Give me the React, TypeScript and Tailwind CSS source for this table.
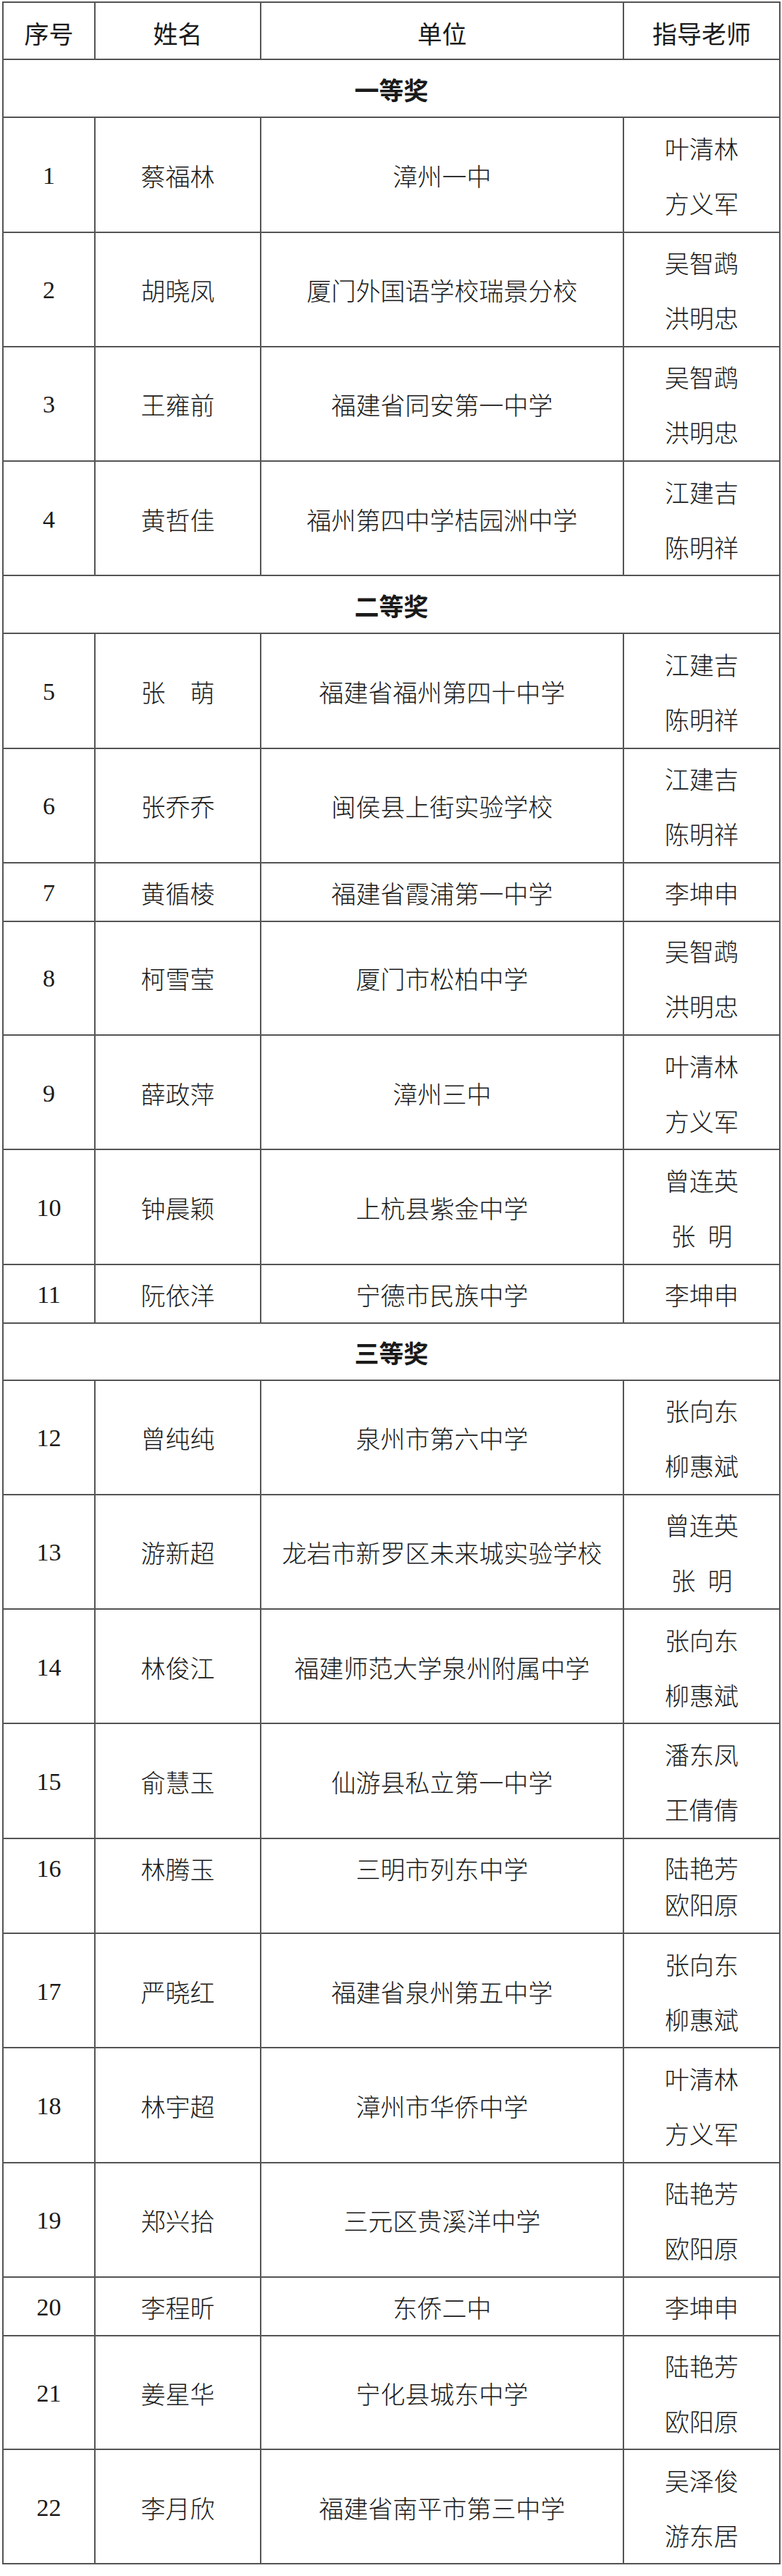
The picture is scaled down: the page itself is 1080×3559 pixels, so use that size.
import React from "react";

type DataRow =
  | { kind: "section"; title: string }
  | {
      kind: "row";
      n: string;
      name: string;
      unit: string;
      teachers: string[];
      h: string;
      compact?: boolean;
    };

const D = "h-[158.25px]";
const S = "h-[80px]";

const rows: DataRow[] = [
  { kind: "section", title: "一等奖" },
  { kind: "row", n: "1", name: "蔡福林", unit: "漳州一中", teachers: ["叶清林", "方义军"], h: D },
  { kind: "row", n: "2", name: "胡晓凤", unit: "厦门外国语学校瑞景分校", teachers: ["吴智鹉", "洪明忠"], h: D },
  { kind: "row", n: "3", name: "王雍前", unit: "福建省同安第一中学", teachers: ["吴智鹉", "洪明忠"], h: D },
  { kind: "row", n: "4", name: "黄哲佳", unit: "福州第四中学桔园洲中学", teachers: ["江建吉", "陈明祥"], h: D },
  { kind: "section", title: "二等奖" },
  { kind: "row", n: "5", name: "张　萌", unit: "福建省福州第四十中学", teachers: ["江建吉", "陈明祥"], h: D },
  { kind: "row", n: "6", name: "张乔乔", unit: "闽侯县上街实验学校", teachers: ["江建吉", "陈明祥"], h: D },
  { kind: "row", n: "7", name: "黄循棱", unit: "福建省霞浦第一中学", teachers: ["李坤申"], h: S },
  { kind: "row", n: "8", name: "柯雪莹", unit: "厦门市松柏中学", teachers: ["吴智鹉", "洪明忠"], h: D },
  { kind: "row", n: "9", name: "薛政萍", unit: "漳州三中", teachers: ["叶清林", "方义军"], h: D },
  { kind: "row", n: "10", name: "钟晨颖", unit: "上杭县紫金中学", teachers: ["曾连英", "张\u2002明"], h: D },
  { kind: "row", n: "11", name: "阮依洋", unit: "宁德市民族中学", teachers: ["李坤申"], h: S },
  { kind: "section", title: "三等奖" },
  { kind: "row", n: "12", name: "曾纯纯", unit: "泉州市第六中学", teachers: ["张向东", "柳惠斌"], h: D },
  { kind: "row", n: "13", name: "游新超", unit: "龙岩市新罗区未来城实验学校", teachers: ["曾连英", "张\u2002明"], h: D },
  { kind: "row", n: "14", name: "林俊江", unit: "福建师范大学泉州附属中学", teachers: ["张向东", "柳惠斌"], h: D },
  { kind: "row", n: "15", name: "俞慧玉", unit: "仙游县私立第一中学", teachers: ["潘东凤", "王倩倩"], h: D },
  { kind: "row", n: "16", name: "林腾玉", unit: "三明市列东中学", teachers: ["陆艳芳", "欧阳原"], h: "h-[131.7px]", compact: true },
  { kind: "row", n: "17", name: "严晓红", unit: "福建省泉州第五中学", teachers: ["张向东", "柳惠斌"], h: D },
  { kind: "row", n: "18", name: "林宇超", unit: "漳州市华侨中学", teachers: ["叶清林", "方义军"], h: D },
  { kind: "row", n: "19", name: "郑兴拾", unit: "三元区贵溪洋中学", teachers: ["陆艳芳", "欧阳原"], h: D },
  { kind: "row", n: "20", name: "李程昕", unit: "东侨二中", teachers: ["李坤申"], h: S },
  { kind: "row", n: "21", name: "姜星华", unit: "宁化县城东中学", teachers: ["陆艳芳", "欧阳原"], h: D },
  { kind: "row", n: "22", name: "李月欣", unit: "福建省南平市第三中学", teachers: ["吴泽俊", "游东居"], h: D },
];

const cjk = "font-['Noto_Sans_CJK_SC','Noto_Sans_CJK_JP',sans-serif]";
const grid = "grid grid-cols-[127px_229px_501px_216px]";
const cell = "border-r-2 border-b-2 border-[#555555] flex justify-center";

export default function App() {
  return (
    <div className="w-[1080px] min-h-[3559px] bg-white pt-[2px] pl-[3px] text-[#1a1a1a]">
      <div className="w-[1075px] border-l-2 border-t-2 border-[#555555]">
        {/* header */}
        <div className={`${grid} h-[79.3px] ${cjk} text-[34px] leading-none`}>
          <div className={`${cell} items-center pt-[6px]`}>序号</div>
          <div className={`${cell} items-center pt-[6px]`}>姓名</div>
          <div className={`${cell} items-center pt-[6px]`}>单位</div>
          <div className={`${cell} items-center pt-[6px]`}>指导老师</div>
        </div>
        {rows.map((r, i) => {
          if (r.kind === "section") {
            return (
              <div
                key={i}
                className={`h-[80px] ${cell} items-center pt-[4px] ${cjk} text-[34px] font-bold leading-none`}
              >
                {r.title}
              </div>
            );
          }
          if (r.compact) {
            return (
              <div key={i} className={`${grid} ${r.h}`}>
                <div className={`${cell} items-start pt-[16px] font-['Liberation_Serif',serif] text-[34px] leading-[50px]`}>
                  {r.n}
                </div>
                <div className={`${cell} items-start pt-[16px] ${cjk} font-light text-[34px] leading-[50px] whitespace-pre`}>
                  {r.name}
                </div>
                <div className={`${cell} items-start pt-[16px] ${cjk} font-light text-[34px] leading-[50px]`}>
                  {r.unit}
                </div>
                <div className={`${cell} flex-col items-center justify-center pt-[2px] ${cjk} font-light text-[34px] leading-[50px]`}>
                  {r.teachers.map((t, j) => (
                    <div key={j} className="whitespace-pre">{t}</div>
                  ))}
                </div>
              </div>
            );
          }
          return (
            <div key={i} className={`${grid} ${r.h}`}>
              <div className={`${cell} items-center pt-[3px] font-['Liberation_Serif',serif] text-[34px] leading-none`}>
                {r.n}
              </div>
              <div className={`${cell} items-center pt-[3px] ${cjk} font-light text-[34px] leading-none whitespace-pre`}>
                {r.name}
              </div>
              <div className={`${cell} items-center pt-[3px] ${cjk} font-light text-[34px] leading-none`}>
                {r.unit}
              </div>
              <div className={`${cell} flex-col items-center justify-center pt-[3px] ${cjk} font-light text-[34px] leading-[76px]`}>
                {r.teachers.map((t, j) => (
                  <div key={j} className="whitespace-pre">{t}</div>
                ))}
              </div>
            </div>
          );
        })}
      </div>
    </div>
  );
}
